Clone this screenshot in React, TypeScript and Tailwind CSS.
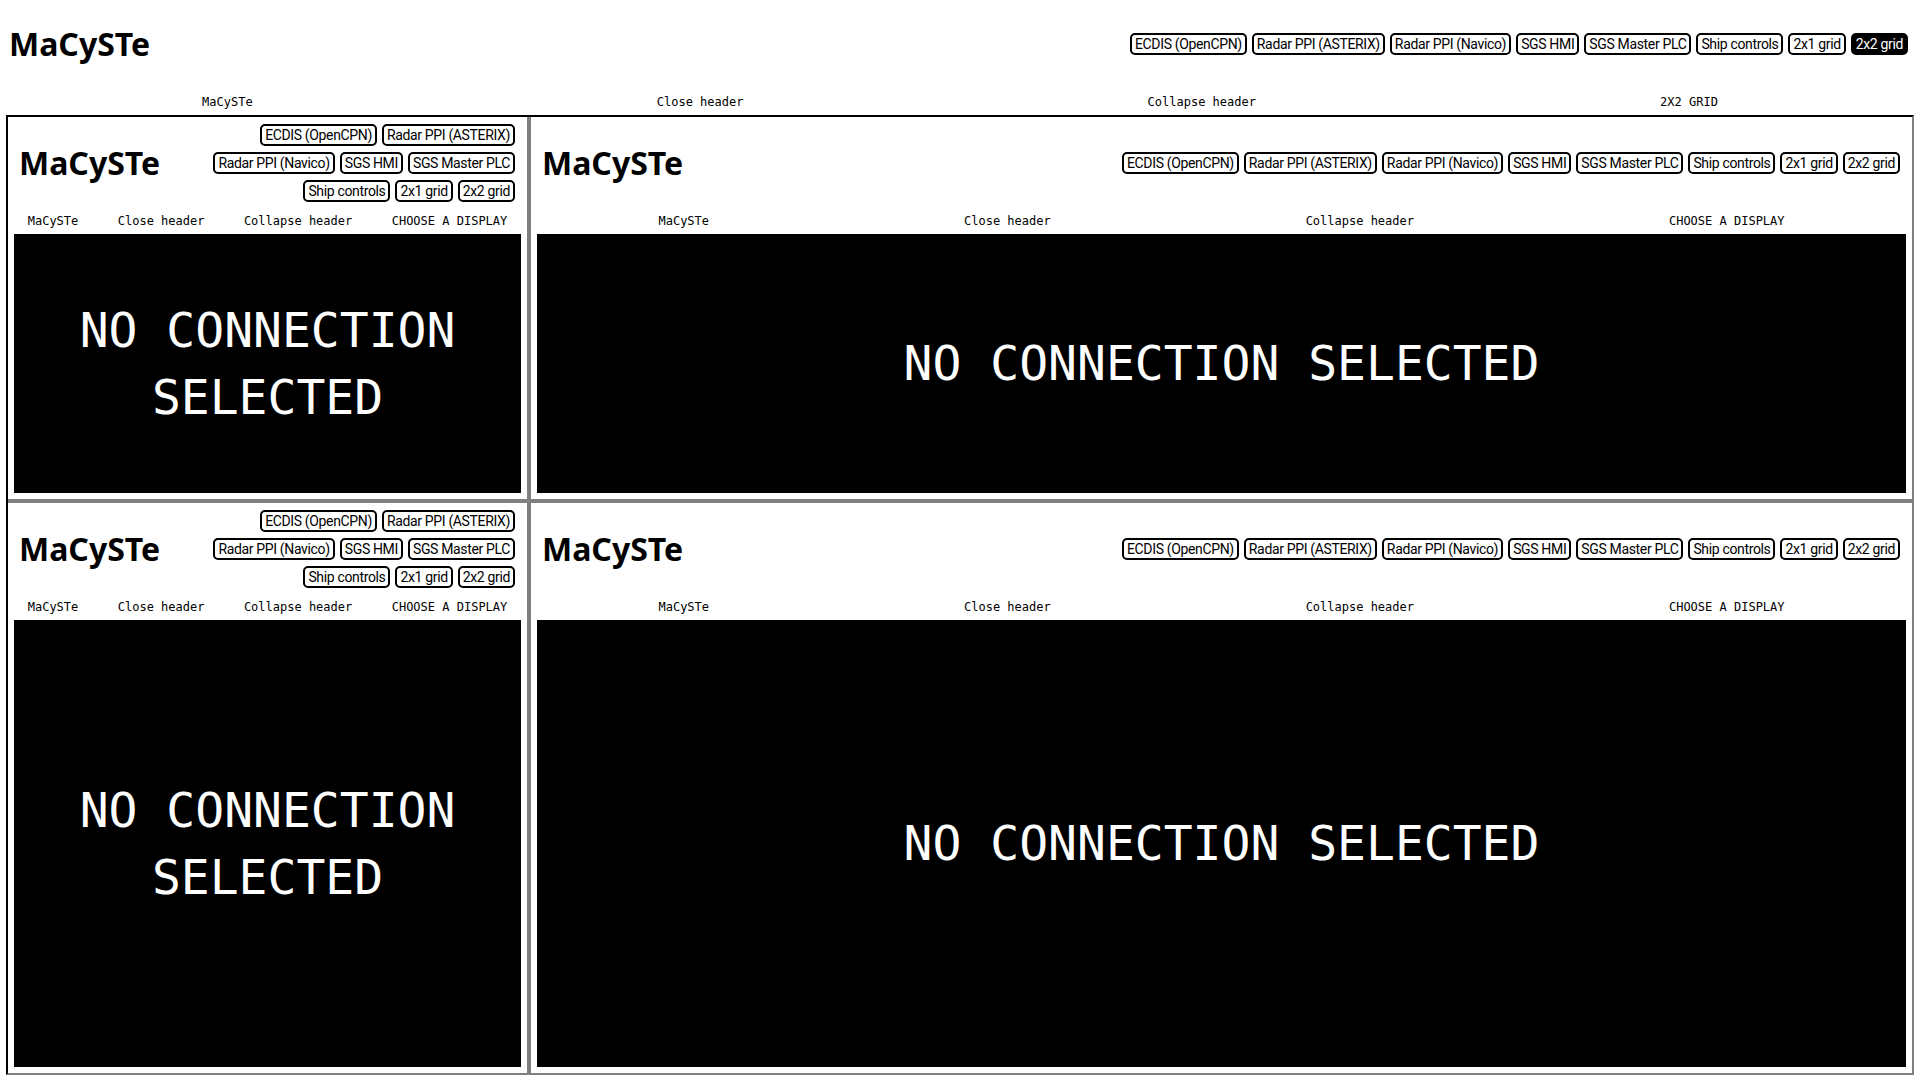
import React from 'react';

const buttons = [
  'ECDIS (OpenCPN)',
  'Radar PPI (ASTERIX)',
  'Radar PPI (Navico)',
  'SGS HMI',
  'SGS Master PLC',
  'Ship controls',
  '2x1 grid',
  '2x2 grid',
];

const Header: React.FC<{ active?: string; inner?: boolean }> = ({ active, inner }) => (
  <div className={`h-[88px] shrink-0 flex items-center pr-[12px] gap-[10px] ${inner ? 'pl-[11px]' : 'pl-[9px]'}`}>
    <h1 className="text-[32px] leading-[40px] font-bold text-black font-['Noto_Sans',sans-serif] shrink-0">MaCySTe</h1>
    <div className="flex-1 flex flex-wrap justify-end gap-x-[5px] gap-y-[6px]">
      {buttons.map((b) => (
        <button
          key={b}
          className={`border-2 border-black rounded-[5px] px-[3px] py-px text-[14px] leading-[16px] tracking-tight font-['Roboto',sans-serif] ${
            active === b ? 'bg-black text-white' : 'bg-white text-black'
          }`}
        >
          {b}
        </button>
      ))}
    </div>
  </div>
);

const Nav: React.FC<{ last: string }> = ({ last }) => (
  <div className="h-[24px] shrink-0 pt-[3px] flex items-center justify-around text-[12px] leading-[16px] text-black font-['DejaVu_Sans_Mono',monospace]">
    <span>MaCySTe</span>
    <span>Close header</span>
    <span>Collapse header</span>
    <span>{last}</span>
  </div>
);

const Cell: React.FC = () => (
  <div className="bg-white flex flex-col pt-[2px] pb-[6px] min-h-0 min-w-0">
    <Header inner />
    <Nav last="CHOOSE A DISPLAY" />
    <div className="mx-[6px] mt-[3px] flex-1 bg-black flex items-center justify-center text-center text-white text-[48px] leading-[67px] font-['DejaVu_Sans_Mono',monospace] px-4">
      NO CONNECTION SELECTED
    </div>
  </div>
);

const App: React.FC = () => {
  return (
    <div className="w-[1920px] h-[1080px] bg-white flex flex-col overflow-hidden">
      <Header active="2x2 grid" />
      <Nav last="2X2 GRID" />
      {/* grid of embedded views */}
      <div className="mx-[6px] mt-[3px] h-[960px] border-2 border-t-black border-l-black border-r-[#808080] border-b-[#808080] bg-[#808080] grid grid-cols-[519px_1fr] grid-rows-[382px_1fr] gap-[4px]">
        <Cell />
        <Cell />
        <Cell />
        <Cell />
      </div>
    </div>
  );
};

export default App;
